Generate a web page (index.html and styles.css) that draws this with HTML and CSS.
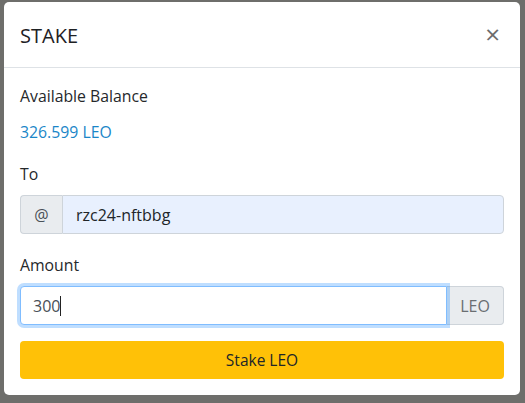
FILE: index.html
```html
<!DOCTYPE html>
<html>
<head>
<meta charset="utf-8">
<link rel="stylesheet" href="styles.css">
</head>
<body>
<div class="modal">
  <div class="modal-header">
    <h5 class="modal-title">STAKE</h5>
    <span class="close">&times;</span>
  </div>
  <div class="modal-body">
    <div class="label">Available Balance</div>
    <div class="balance">326.599 LEO</div>
    <div class="label to">To</div>
    <div class="input-group">
      <span class="addon addon-left">@</span>
      <span class="field autofill">rzc24-nftbbg</span>
    </div>
    <div class="label amount">Amount</div>
    <div class="input-group">
      <span class="field focus">300<span class="caret"></span></span>
      <span class="addon addon-right">LEO</span>
    </div>
    <div class="btn">Stake LEO</div>
  </div>
</div>
</body>
</html>
```
FILE: styles.css
```css
html, body {
  margin: 0;
  padding: 0;
  height: 100%;
}
body {
  background: #6e6e6b;
  font-family: "Open Sans", "Noto Sans", sans-serif;
  color: #212529;
  overflow: hidden;
}
.modal {
  margin: 2px 0 0 4px;
  width: 516px;
  background: #fff;
  border-radius: 5px;
}
.modal-header {
  display: flex;
  align-items: center;
  justify-content: space-between;
  padding: 0 16px;
  border-bottom: 1px solid #dee2e6;
  box-sizing: border-box;
  height: 66px;
}
.modal-title {
  margin: 0;
  font-size: 20px;
  font-weight: 400;
  padding-top: 2px;
  color: #1e2124;
}
.close {
  font-size: 26px;
  color: #6c6c6c;
  line-height: 1;
  margin-right: 4px;
  padding-bottom: 2px;
}
.modal-body {
  padding: 16px;
  display: flex;
  flex-direction: column;
}
.label {
  font-size: 15.8px;
  line-height: 24px;
  color: #25282b;
}
.balance {
  font-size: 15.8px;
  line-height: 24px;
  color: #1a86c8;
  margin-top: 12px;
}
.to {
  margin-top: 18px;
}
.amount {
  margin-top: 19px;
}
.input-group {
  display: flex;
  height: 39px;
  margin-top: 9px;
  font-size: 16px;
}
.addon {
  display: flex;
  align-items: center;
  justify-content: center;
  background: #e9ecef;
  border: 1px solid #ced4da;
  color: #495057;
  box-sizing: border-box;
}
.addon-left {
  width: 42px;
  border-radius: 4px 0 0 4px;
  border-right: none;
}
.addon-right {
  width: 57px;
  border-radius: 0 4px 4px 0;
  border-left: none;
  color: #6a6e72;
}
.field {
  flex: 1;
  display: flex;
  align-items: center;
  padding: 0 12px;
  box-sizing: border-box;
  border: 1px solid #ced4da;
}
.autofill {
  background: #e8f0fe;
  border-radius: 0 4px 4px 0;
  color: #212529;
  padding-left: 13px;
}
.focus {
  background: #fff;
  border: 1px solid #80bdff;
  border-radius: 4px 0 0 4px;
  box-shadow: 0 0 0 3px rgba(0, 123, 255, 0.25);
  color: #495057;
  position: relative;
  z-index: 1;
}
.caret {
  display: inline-block;
  width: 1px;
  height: 20px;
  background: #222;
}
.btn {
  margin-top: 16px;
  height: 38px;
  background: #ffc107;
  border-radius: 4px;
  display: flex;
  align-items: center;
  justify-content: center;
  font-size: 15.5px;
  color: #212529;
}
```
